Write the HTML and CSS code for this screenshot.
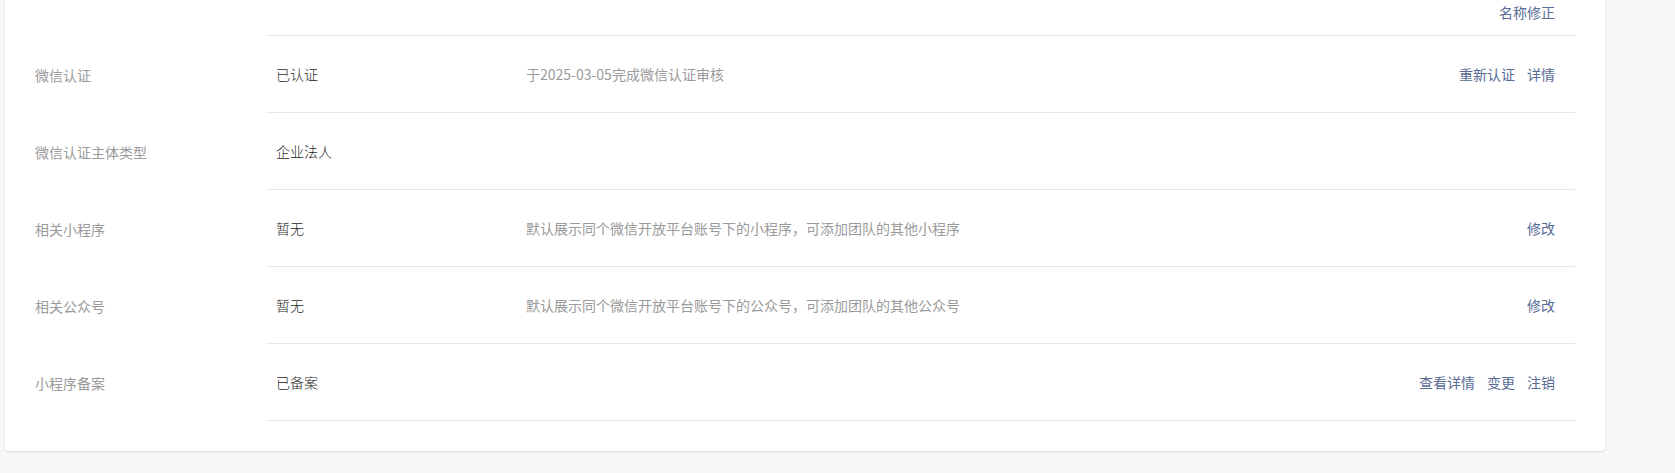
FILE: index.html
```html
<!DOCTYPE html>
<html lang="zh-CN">
<head>
    <meta charset="UTF-8">
    <meta name="viewport" content="width=device-width, initial-scale=1.0">
    <title>账号设置</title>
    <link rel="stylesheet" href="styles.css">
</head>
<body>
    <div class="page">
        <div class="card">
            <div class="row row-tail">
                <div class="label"></div>
                <div class="content">
                    <div class="value"></div>
                    <div class="desc"></div>
                    <div class="actions"><a href="#">名称修正</a></div>
                </div>
            </div>
            <div class="row">
                <div class="label">微信认证</div>
                <div class="content">
                    <div class="value">已认证</div>
                    <div class="desc">于2025-03-05完成微信认证审核</div>
                    <div class="actions"><a href="#">重新认证</a><a href="#">详情</a></div>
                </div>
            </div>
            <div class="row">
                <div class="label">微信认证主体类型</div>
                <div class="content">
                    <div class="value">企业法人</div>
                    <div class="desc"></div>
                    <div class="actions"></div>
                </div>
            </div>
            <div class="row">
                <div class="label">相关小程序</div>
                <div class="content">
                    <div class="value">暂无</div>
                    <div class="desc">默认展示同个微信开放平台账号下的小程序，可添加团队的其他小程序</div>
                    <div class="actions"><a href="#">修改</a></div>
                </div>
            </div>
            <div class="row">
                <div class="label">相关公众号</div>
                <div class="content">
                    <div class="value">暂无</div>
                    <div class="desc">默认展示同个微信开放平台账号下的公众号，可添加团队的其他公众号</div>
                    <div class="actions"><a href="#">修改</a></div>
                </div>
            </div>
            <div class="row">
                <div class="label">小程序备案</div>
                <div class="content">
                    <div class="value">已备案</div>
                    <div class="desc"></div>
                    <div class="actions"><a href="#">查看详情</a><a href="#">变更</a><a href="#">注销</a></div>
                </div>
            </div>
        </div>
    </div>
</body>
</html>
```

FILE: styles.css
```css
* {
    box-sizing: border-box;
}

body {
    margin: 0;
    background-color: #f6f7f9;
    font-family: "Noto Sans CJK SC", "Noto Sans", sans-serif;
    font-size: 14px;
    line-height: 22px;
    color: #353535;
}

.page {
    padding: 0 70px 22px 5px;
}

.card {
    width: 1600px;
    background-color: #fff;
    border-radius: 0 0 4px 4px;
    box-shadow: 0 1px 2px rgba(0, 0, 0, 0.12);
    padding: 0 30px 30px 30px;
}

.row {
    display: flex;
    height: 77px;
}

.label {
    width: 231px;
    flex-shrink: 0;
    display: flex;
    align-items: center;
    color: #9a9a9a;
}

.content {
    flex: 1;
    display: flex;
    align-items: center;
    padding: 0 20px 0 10px;
    border-bottom: 1px solid #e7e7eb;
}

.value {
    width: 250px;
    flex-shrink: 0;
    color: #1f1f1f;
    font-weight: 300;
}

.desc {
    flex: 1;
    color: #9a9a9a;
}

.actions {
    display: flex;
    gap: 12px;
}

.actions a {
    color: #576b95;
    text-decoration: none;
}

.row-tail {
    height: 36px;
}

.row-tail .content {
    align-items: flex-start;
    padding-top: 1px;
}
```
